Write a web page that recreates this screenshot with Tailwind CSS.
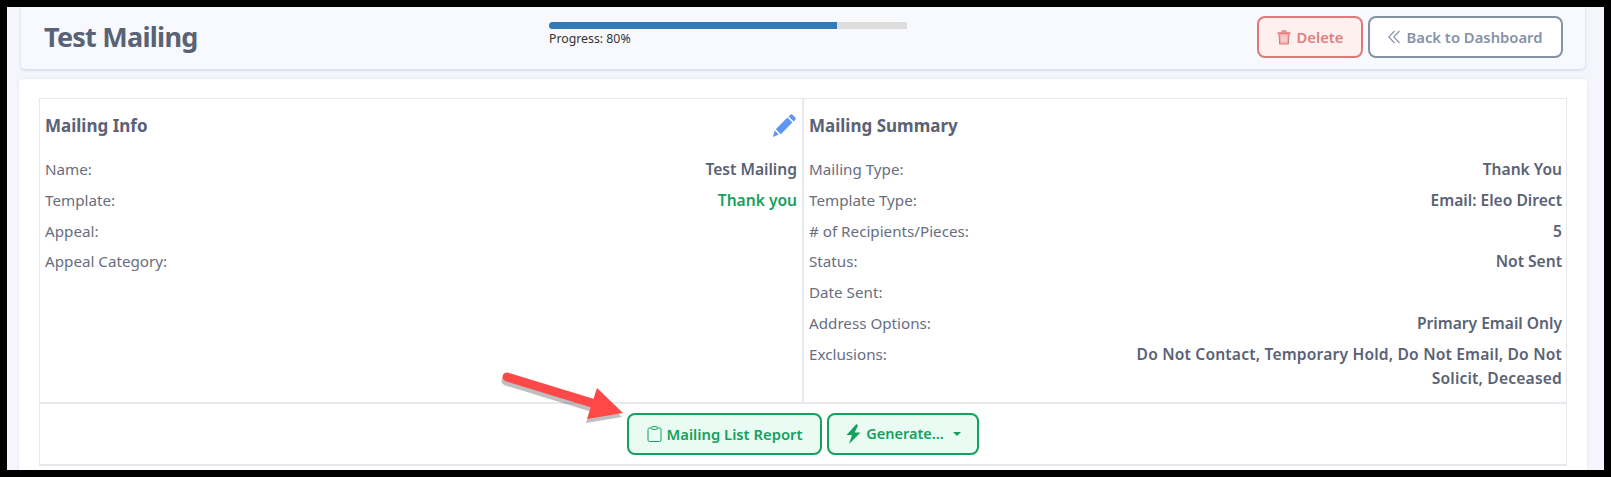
<!DOCTYPE html>
<html lang="en">
<head>
    <meta charset="UTF-8" />
    <title>Test Mailing</title>
    <script src="https://cdn.jsdelivr.net/npm/@tailwindcss/browser@4"></script>
</head>
<body class="bg-black h-[477px] overflow-hidden pt-[7px] pl-[7px] font-['Noto_Sans',sans-serif]">
<div class="relative w-[1597px] h-[463px] overflow-hidden bg-[#f4f5fd]">

    <!-- header bar -->
    <div class="ml-[14px] w-[1564px] h-[62px] bg-[#f8f9ff] rounded-b shadow-[0_1px_3px_rgba(60,70,110,0.2)] flex items-start pl-[23px] pr-[22px]">
        <h1 class="w-[505px] mt-[10px] text-[27px] leading-[40px] font-bold text-[#5a6275] tracking-[-0.75px]">Test Mailing</h1>
        <div class="w-[358px] mt-[14.5px]">
            <div class="h-[7px] bg-[#dddddd] rounded-l-sm">
                <div class="h-[7px] w-[288px] bg-[#337ab7] rounded-l-sm"></div>
            </div>
            <p class="text-[12.3px] leading-[18px] mt-px text-[#333]">Progress: 80%</p>
        </div>
        <div class="ml-auto flex gap-[5px] mt-[9px]">
            <button class="w-[106px] h-[42px] flex items-center justify-center gap-[6px] rounded-lg border-2 border-[#dc7a7a] bg-[#fff0f0] text-[#e07f7f] text-[14.8px] font-semibold">
                <svg width="14" height="15" viewBox="0 0 14 15" fill="none" stroke="currentColor"><path d="M0.5 3h13M4.5 3l1-2h3l1 2" stroke-width="1.3"/><path d="M2 3.5l.7 10.5h8.6l.7-10.5z" fill="currentColor" fill-opacity=".55" stroke-width="1.2"/><path d="M5 5.5v6.5M7 5.5v6.5M9 5.5v6.5" stroke="#fff0f0" stroke-width=".8"/></svg>
                Delete
            </button>
            <button class="w-[195px] h-[42px] flex items-center justify-center gap-[6px] rounded-lg border-2 border-[#8592a6] bg-white text-[#8792a6] text-[14.8px] font-semibold">
                <svg width="12" height="14" viewBox="0 0 12 14" fill="none" stroke="currentColor" stroke-width="1.1"><path d="M6.5 1L.8 7l5.7 6M11.5 1L5.8 7l5.7 6"/></svg>
                Back to Dashboard
            </button>
        </div>
    </div>

    <!-- main card -->
    <div class="ml-[12px] mt-[10px] w-[1568px] h-[400px] bg-white rounded shadow-[0_0_2px_rgba(60,70,110,0.15)] pt-[19px] pl-[20px]">
        <div class="w-[1528px] border border-b-2 border-[#e8e9ef]">
            <div class="grid grid-cols-[764px_1fr] h-[303px]">
                <section class="pl-[5px] pr-[5px] border-r-2 border-[#e8e9ef]">
                    <div class="flex items-center justify-between h-[53px]">
                        <h2 class="text-[17px] font-bold text-[#5a6275]">Mailing Info</h2>
                        <svg class="mr-px" width="24" height="24" viewBox="0 0 24 24" fill="#5f95f5"><path d="M1 23l1.6-6.6L6.8 20.6zM3.8 15.2L15.4 3.6l5 5L8.8 20.2zM16.6 2.4l1.7-1.7a1.5 1.5 0 0 1 2.1 0l2.9 2.9a1.5 1.5 0 0 1 0 2.1l-1.7 1.7z"/></svg>
                    </div>
                    <dl class="text-[15.2px] leading-[30.8px] text-[#676e80] mt-[2px]">
                        <div class="flex justify-between"><dt>Name:</dt><dd class="text-[15.6px] font-semibold text-[#5a6275]">Test Mailing</dd></div>
                        <div class="flex justify-between"><dt>Template:</dt><dd class="text-[15.6px] font-semibold text-[#16a05d]">Thank you</dd></div>
                        <div class="flex justify-between"><dt>Appeal:</dt><dd></dd></div>
                        <div class="flex justify-between"><dt>Appeal Category:</dt><dd></dd></div>
                    </dl>
                </section>
                <section class="pl-[5px] pr-[4px]">
                    <div class="flex items-center h-[53px]">
                        <h2 class="text-[17px] font-bold text-[#5a6275]">Mailing Summary</h2>
                    </div>
                    <dl class="text-[15.2px] leading-[30.8px] text-[#676e80] mt-[2px]">
                        <div class="flex justify-between"><dt>Mailing Type:</dt><dd class="text-[15.6px] font-semibold text-[#5a6275]">Thank You</dd></div>
                        <div class="flex justify-between"><dt>Template Type:</dt><dd class="text-[15.6px] font-semibold text-[#5a6275]">Email: Eleo Direct</dd></div>
                        <div class="flex justify-between"><dt># of Recipients/Pieces:</dt><dd class="text-[15.6px] font-semibold text-[#5a6275]">5</dd></div>
                        <div class="flex justify-between"><dt>Status:</dt><dd class="text-[15.6px] font-semibold text-[#5a6275]">Not Sent</dd></div>
                        <div class="flex justify-between"><dt>Date Sent:</dt><dd></dd></div>
                        <div class="flex justify-between"><dt>Address Options:</dt><dd class="text-[15.6px] font-semibold text-[#5a6275]">Primary Email Only</dd></div>
                        <div class="flex justify-between"><dt>Exclusions:</dt><dd class="w-[440px] text-right text-[15.6px] leading-[24.6px] pt-[3px] font-semibold tracking-[0.18px] text-[#5a6275]">Do Not Contact, Temporary Hold, Do Not Email, Do Not Solicit, Deceased</dd></div>
                    </dl>
                </section>
            </div>
            <div class="h-[62px] border-t-2 border-[#e8e9ef] flex pl-[587px] pt-[9px] gap-[5px]">
                <button class="w-[195px] h-[42px] flex items-center justify-center gap-[5px] rounded-lg border-2 border-[#16a05d] bg-[#eafbf4] text-[#16a05d] text-[14.8px] font-semibold">
                    <svg width="15" height="16" viewBox="0 0 15 16" fill="none" stroke="currentColor" stroke-width="1"><rect x="1" y="2" width="13" height="13.5" rx="1.5"/><rect x="4.8" y=".6" width="5.4" height="2.8" rx=".8" fill="#eafbf4"/></svg>
                    Mailing List Report
                </button>
                <button class="w-[152px] h-[42px] flex items-center justify-center gap-[4px] rounded-lg border-2 border-[#16a05d] bg-[#eafbf4] text-[#16a05d] text-[14.5px] font-semibold">
                    <svg width="17" height="20" viewBox="0 0 16 20" fill="currentColor"><path d="M11 0L1 11h5.5L3.5 20 15 8.5H9.2L12.5 1.5z"/></svg>
                    Generate...
                    <svg class="ml-[5px]" width="8" height="4" viewBox="0 0 8 4" fill="currentColor"><path d="M0 0h8L4 4z"/></svg>
                </button>
            </div>
        </div>
    </div>

    <!-- annotation arrow -->
    <svg class="absolute left-0 top-0 pointer-events-none" width="1597" height="463" viewBox="7 7 1597 463" fill="none">
        <path d="M507 377L592 403" stroke="#000" stroke-opacity=".25" stroke-width="9" stroke-linecap="round" transform="translate(-1 4)"/>
        <path d="M597 388L623 413L587 419z" fill="#000" fill-opacity=".25" transform="translate(-1 4)"/>
        <path d="M507 377L592 403" stroke="#ff4848" stroke-width="9" stroke-linecap="round"/>
        <path d="M597 388L623 413L587 419z" fill="#ff4848"/>
    </svg>
</div>
</body>
</html>
